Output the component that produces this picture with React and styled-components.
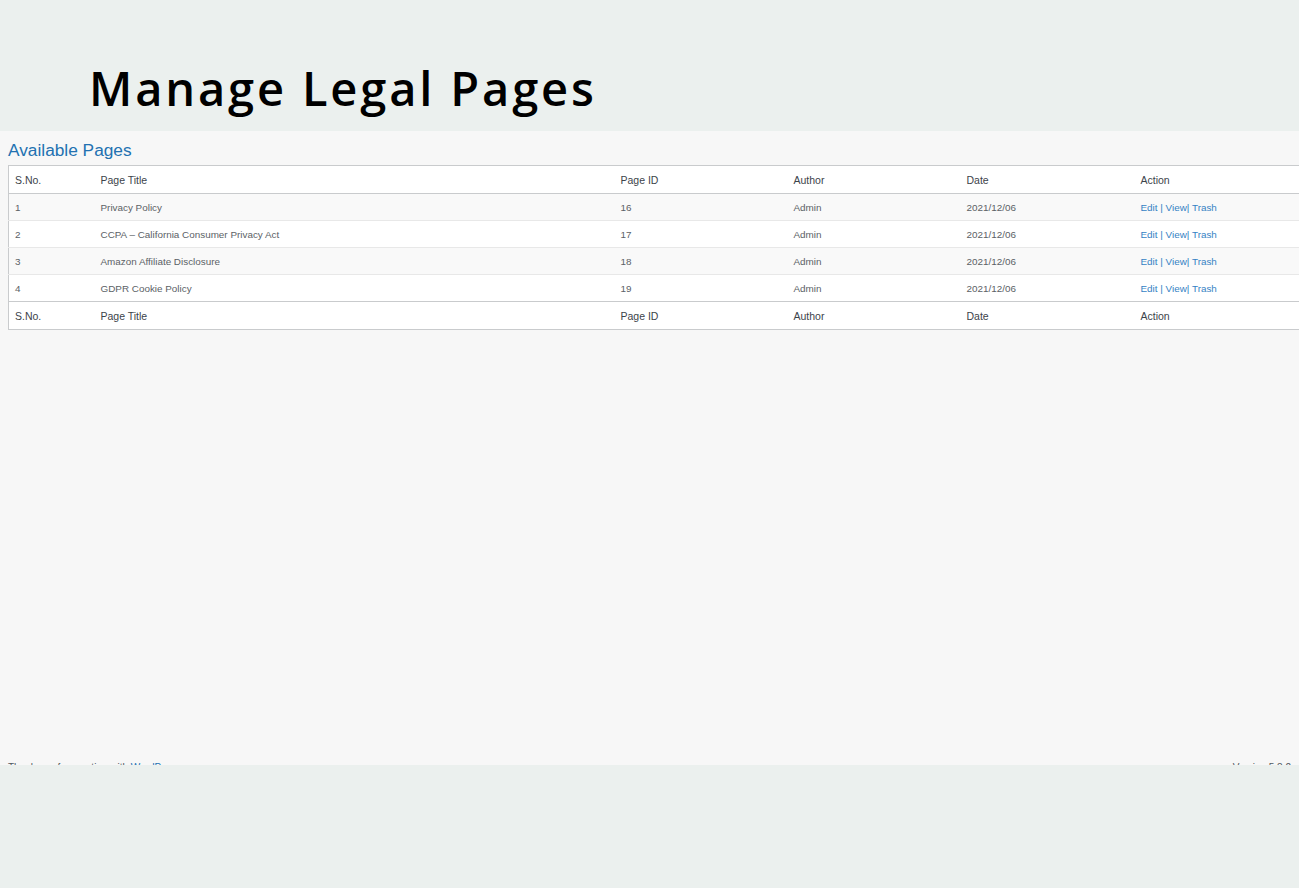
import React from 'react'
import styled, { createGlobalStyle } from 'styled-components'

const Global = createGlobalStyle`
  html, body {
    margin: 0;
    padding: 0;
    background: #ebf0ee;
  }
`;

const Page = styled.div`
  width: 1299px;
  height: 888px;
  background: #ebf0ee;
  display: flex;
  flex-direction: column;
  overflow: hidden;
`;

const Banner = styled.header`
  height: 131px;
  flex: none;
  display: flex;
  align-items: flex-end;
  padding-left: 89px;
  box-sizing: border-box;
  h1 {
    margin: 0 0 19px;
    font-family: 'Open Sans', sans-serif;
    font-weight: 600;
    font-size: 47px;
    line-height: 1;
    color: #000;
    letter-spacing: 2.85px;
  }
`;

const Shot = styled.section`
  height: 634px;
  flex: none;
  background: #f7f7f7;
  display: flex;
  flex-direction: column;
  overflow: hidden;
  font-family: 'Liberation Sans', Arial, sans-serif;
`;

const Heading = styled.h2`
  margin: 8px 0 0 8px;
  font-weight: 400;
  font-size: 17.3px;
  line-height: 22px;
  color: #2271b1;
`;

const Table = styled.table`
  margin: 4px 0 0 8px;
  width: 1310px;
  border-collapse: collapse;
  background: #fff;
  border: 1px solid #c9cbcd;
  table-layout: fixed;
`;

const Head = styled.th`
  height: 27px;
  padding: 0 0 0 6px;
  text-align: left;
  font-weight: 400;
  font-size: 10.5px;
  color: #3c434a;
  border-${p => p.foot ? 'top' : 'bottom'}: 1px solid #c9cbcd;
`;

const Row = styled.tr`
  background: ${p => p.odd ? '#f9f9f9' : '#fff'};
  td {
    height: 26px;
    padding: 0 0 0 6px;
    font-size: 9.9px;
    color: #5b6166;
    border-top: ${p => p.first ? 'none' : '1px solid #e8e8e8'};
  }
`;

const Actions = styled.td`
  a {
    color: #3582c4;
    text-decoration: none;
  }
  && { color: #3582c4; }
`;

const Footer = styled.footer`
  margin-top: auto;
  margin-bottom: -8px;
  display: flex;
  justify-content: space-between;
  padding: 0 8px;
  font-size: 10px;
  line-height: 10px;
  color: #50575e;
  a { color: #2271b1; text-decoration: none; }
`;

const cols = [86, 520, 173, 173, 174, 184]
const labels = ['S.No.', 'Page Title', 'Page ID', 'Author', 'Date', 'Action']

const pages = [
  { title: 'Privacy Policy', id: 16 },
  { title: 'CCPA – California Consumer Privacy Act', id: 17 },
  { title: 'Amazon Affiliate Disclosure', id: 18 },
  { title: 'GDPR Cookie Policy', id: 19 },
]

const App = () => (
  <Page>
    <Global />
    <Banner><h1>Manage Legal Pages</h1></Banner>
    <Shot>
      <Heading>Available Pages</Heading>
      <Table>
        <colgroup>
          {cols.map((w, i) => <col key={i} style={{ width: w }} />)}
        </colgroup>
        <thead>
          <tr>{labels.map(l => <Head key={l}>{l}</Head>)}</tr>
        </thead>
        <tbody>
          {pages.map((p, i) => (
            <Row key={p.id} odd={i % 2 === 0} first={i === 0}>
              <td>{i + 1}</td>
              <td>{p.title}</td>
              <td>{p.id}</td>
              <td>Admin</td>
              <td>2021/12/06</td>
              <Actions><a href="#">Edit</a> | <a href="#">View</a>| <a href="#">Trash</a></Actions>
            </Row>
          ))}
        </tbody>
        <tfoot>
          <tr>{labels.map(l => <Head foot key={l}>{l}</Head>)}</tr>
        </tfoot>
      </Table>
      <Footer>
        <span>Thank you for creating with <a href="#">WordPress</a>.</span>
        <span>Version 5.8.2</span>
      </Footer>
    </Shot>
  </Page>
)

export default App
